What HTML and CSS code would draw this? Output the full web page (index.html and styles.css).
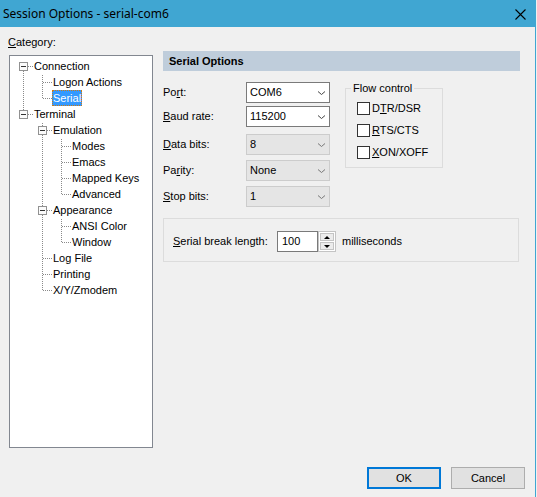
FILE: index.html
```html
<!DOCTYPE html>
<html>
<head>
<meta charset="utf-8">
<title>Session Options - serial-com6</title>
<link rel="stylesheet" href="styles.css">
</head>
<body>
<div class="window">
  <div class="titlebar">
    <span class="title">Session Options - serial-com6</span>
    <svg class="close" width="11" height="11" viewBox="0 0 11 11"><path d="M0.5 0.5 L10.5 10.5 M10.5 0.5 L0.5 10.5" stroke="#000" stroke-width="1.1" fill="none"/></svg>
  </div>
  <div class="body">
    <div class="left">
      <div class="cat-label"><u>C</u>ategory:</div>
      <div class="tree">
        <svg class="tree-lines" width="142" height="391" viewBox="0 0 142 391">
          <g stroke="#8a8a8a" stroke-width="1" stroke-dasharray="1 1" fill="none" shape-rendering="crispEdges">
            <line x1="13.5" y1="15" x2="13.5" y2="54"/>
            <line x1="18" y1="10.5" x2="23" y2="10.5"/>
            <line x1="18" y1="58.5" x2="23" y2="58.5"/>
            <line x1="32.5" y1="19" x2="32.5" y2="43"/>
            <line x1="33" y1="26.5" x2="42" y2="26.5"/>
            <line x1="33" y1="42.5" x2="42" y2="42.5"/>
            <line x1="32.5" y1="67" x2="32.5" y2="235"/>
            <line x1="37" y1="74.5" x2="42" y2="74.5"/>
            <line x1="37" y1="154.5" x2="42" y2="154.5"/>
            <line x1="33" y1="202.5" x2="42" y2="202.5"/>
            <line x1="33" y1="218.5" x2="42" y2="218.5"/>
            <line x1="33" y1="234.5" x2="42" y2="234.5"/>
            <line x1="51.5" y1="83" x2="51.5" y2="139"/>
            <line x1="51.5" y1="163" x2="51.5" y2="187"/>
            <line x1="52" y1="90.5" x2="61" y2="90.5"/>
            <line x1="52" y1="106.5" x2="61" y2="106.5"/>
            <line x1="52" y1="122.5" x2="61" y2="122.5"/>
            <line x1="52" y1="138.5" x2="61" y2="138.5"/>
            <line x1="52" y1="170.5" x2="61" y2="170.5"/>
            <line x1="52" y1="186.5" x2="61" y2="186.5"/>
          </g>
          <g shape-rendering="crispEdges">
            <rect x="9.5" y="6.5" width="8" height="8" fill="#fbfbfb" stroke="#919191"/>
            <line x1="11" y1="10.5" x2="16" y2="10.5" stroke="#333"/>
            <rect x="9.5" y="54.5" width="8" height="8" fill="#fbfbfb" stroke="#919191"/>
            <line x1="11" y1="58.5" x2="16" y2="58.5" stroke="#333"/>
            <rect x="28.5" y="70.5" width="8" height="8" fill="#fbfbfb" stroke="#919191"/>
            <line x1="30" y1="74.5" x2="35" y2="74.5" stroke="#333"/>
            <rect x="28.5" y="150.5" width="8" height="8" fill="#fbfbfb" stroke="#919191"/>
            <line x1="30" y1="154.5" x2="35" y2="154.5" stroke="#333"/>
          </g>
        </svg>
        <div class="node l0">Connection</div>
        <div class="node l1">Logon Actions</div>
        <div class="node l1 sel"><span class="hl">Serial</span></div>
        <div class="node l0">Terminal</div>
        <div class="node l1">Emulation</div>
        <div class="node l2">Modes</div>
        <div class="node l2">Emacs</div>
        <div class="node l2">Mapped Keys</div>
        <div class="node l2">Advanced</div>
        <div class="node l1">Appearance</div>
        <div class="node l2">ANSI Color</div>
        <div class="node l2">Window</div>
        <div class="node l1">Log File</div>
        <div class="node l1">Printing</div>
        <div class="node l1">X/Y/Zmodem</div>
      </div>
    </div>
    <div class="right">
      <div class="head">Serial Options</div>
      <div class="settings">
        <div class="fields">
          <div class="row r-port"><span class="lbl">Po<u>r</u>t:</span><div class="combo"><span>COM6</span><svg class="chev" width="7" height="4" viewBox="0 0 7 4"><path d="M0 0.5 L3.5 3.5 L7 0.5" stroke="#444" fill="none"/></svg></div></div>
          <div class="row r-baud"><span class="lbl"><u>B</u>aud rate:</span><div class="combo"><span>115200</span><svg class="chev" width="7" height="4" viewBox="0 0 7 4"><path d="M0 0.5 L3.5 3.5 L7 0.5" stroke="#444" fill="none"/></svg></div></div>
          <div class="row r-data"><span class="lbl"><u>D</u>ata bits:</span><div class="combo off"><span>8</span><svg class="chev" width="7" height="4" viewBox="0 0 7 4"><path d="M0 0.5 L3.5 3.5 L7 0.5" stroke="#777" fill="none"/></svg></div></div>
          <div class="row r-par"><span class="lbl">Pa<u>r</u>ity:</span><div class="combo off"><span>None</span><svg class="chev" width="7" height="4" viewBox="0 0 7 4"><path d="M0 0.5 L3.5 3.5 L7 0.5" stroke="#777" fill="none"/></svg></div></div>
          <div class="row r-stop"><span class="lbl"><u>S</u>top bits:</span><div class="combo off"><span>1</span><svg class="chev" width="7" height="4" viewBox="0 0 7 4"><path d="M0 0.5 L3.5 3.5 L7 0.5" stroke="#777" fill="none"/></svg></div></div>
        </div>
        <div class="group flow">
          <div class="legend">Flow control</div>
          <div class="check"><span class="box"></span><span>D<u>T</u>R/DSR</span></div>
          <div class="check"><span class="box"></span><span><u>R</u>TS/CTS</span></div>
          <div class="check"><span class="box"></span><span><u>X</u>ON/XOFF</span></div>
        </div>
      </div>
      <div class="group brk">
        <span class="brk-lbl"><u>S</u>erial break length:</span>
        <div class="edit">100</div>
        <div class="spin"><i class="up"><b></b></i><i class="dn"><b></b></i></div>
        <span class="unit">milliseconds</span>
      </div>
    </div>
  </div>
  <div class="buttons">
    <div class="btn def">OK</div>
    <div class="btn">Cancel</div>
  </div>
</div>
</body>
</html>
```
FILE: styles.css
```css
* { box-sizing: border-box; }
body {
  margin: 0;
  background: #f0f0f0;
  font: 11px/13px "Liberation Sans", Arial, sans-serif;
  color: #000;
}
u { text-decoration: underline; text-underline-offset: 1px; }
.window {
  width: 536px;
  height: 497px;
  border-right: 1px solid #3fa6d2;
  background: #f0f0f0;
  display: flex;
  flex-direction: column;
}
.titlebar {
  height: 27px;
  flex: none;
  background: #40a6d2;
  display: flex;
  align-items: center;
  justify-content: space-between;
  padding: 0 9px 0 3px;
}
.title {
  font: 12px/16px "Noto Sans", "Open Sans", sans-serif;
  color: #000;
}
.close { display: block; margin-top: 1px; }
.body {
  flex: 1;
  display: flex;
  padding: 9px 0 0 8px;
}
.left { width: 145px; flex: none; }
.cat-label { height: 13px; margin-bottom: 6px; }
.tree {
  position: relative;
  margin-left: 1px;
  width: 144px;
  height: 393px;
  border: 1px solid #828790;
  background: #fff;
  padding-top: 2px;
}
.tree-lines { position: absolute; left: 0; top: 0; }
.node {
  position: relative;
  height: 16px;
  line-height: 16px;
  white-space: nowrap;
}
.l0 { padding-left: 24px; }
.l1 { padding-left: 43px; }
.l2 { padding-left: 62px; }
.sel { padding-left: 42px; }
.hl {
  display: inline-block;
  height: 16px;
  line-height: 14px;
  padding: 0;
  background: #3399ff;
  color: #fff;
  border: 1px dotted #d07a10;
}
.right {
  margin-left: 10px;
  width: 358px;
  padding-top: 15px;
}
.head {
  width: 357px;
  height: 20px;
  line-height: 20px;
  background: #bfcddb;
  padding-left: 6px;
  font-weight: bold;
}
.settings {
  display: flex;
  align-items: flex-start;
  margin-top: 11px;
}
.fields { width: 167px; flex: none; }
.row {
  display: flex;
  align-items: center;
  height: 21px;
}
.r-baud { margin-top: 3px; }
.r-data { margin-top: 7px; }
.r-par, .r-stop { margin-top: 5px; }
.lbl { width: 83px; }
.combo {
  width: 84px;
  height: 21px;
  border: 1px solid #7a7a7a;
  background: #fff;
  display: flex;
  align-items: center;
  justify-content: space-between;
  padding: 0 4px 0 3px;
}
.combo.off {
  background: #e5e5e5;
  border-color: #cccccc;
}
.chev { display: block; }
.group { border: 1px solid #dcdcdc; }
.flow {
  width: 98px;
  margin-left: 15px;
  margin-top: 6px;
  padding-bottom: 8px;
}
.legend {
  width: max-content;
  margin: -7px 0 0 5px;
  padding: 0 2px;
  background: #f0f0f0;
}
.check {
  display: flex;
  align-items: center;
  height: 13px;
  margin: 9px 0 0 11px;
}
.legend + .check { margin-top: 7px; }
.box {
  width: 13px;
  height: 13px;
  border: 1px solid #333;
  background: #fff;
  margin-right: 2px;
}
.brk {
  width: 356px;
  height: 44px;
  margin-top: 11px;
  display: flex;
  align-items: center;
  padding: 12px 0 9px 9px;
}
.brk-lbl { width: 104px; }
.edit {
  width: 41px;
  height: 21px;
  border: 1px solid #7a7a7a;
  background: #fff;
  padding-left: 4px;
  line-height: 19px;
}
.spin {
  width: 18px;
  height: 21px;
  border: 1px solid #c4c4c4;
  background: #fff;
  padding: 1px;
  display: flex;
  flex-direction: column;
  gap: 1px;
}
.spin i {
  flex: 1;
  border: 1px solid #c4c4c4;
  background: #ececec;
  display: flex;
  align-items: center;
  justify-content: center;
}
.spin .up b {
  width: 0; height: 0;
  border-left: 3px solid transparent;
  border-right: 3px solid transparent;
  border-bottom: 3px solid #000;
}
.spin .dn b {
  width: 0; height: 0;
  border-left: 3px solid transparent;
  border-right: 3px solid transparent;
  border-top: 3px solid #000;
}
.unit { margin-left: 6px; }
.buttons {
  flex: none;
  display: flex;
  justify-content: flex-end;
  gap: 10px;
  padding: 0 10px 8px 0;
}
.btn {
  width: 74px;
  height: 22px;
  border: 1px solid #adadad;
  background: #e1e1e1;
  display: flex;
  align-items: center;
  justify-content: center;
}
.btn.def { border: 2px solid #0078d7; }
```
